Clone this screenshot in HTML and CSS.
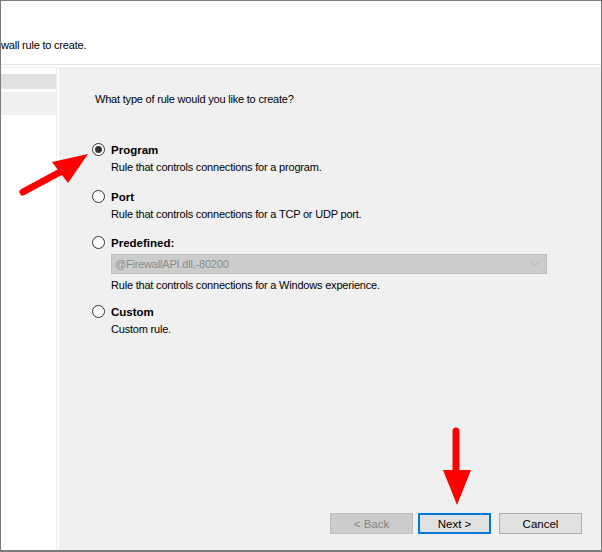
FILE: index.html
```html
<!DOCTYPE html>
<html>
<head>
<meta charset="utf-8">
<link rel="stylesheet" href="styles.css">
</head>
<body>
<div class="window">
  <div class="header">
    <div class="subtitle">wall rule to create.</div>
  </div>
  <div class="main">
    <div class="nav">
      <div class="nav-dots"></div>
      <div class="nav-item"></div>
    </div>
    <div class="content">
      <div class="question">What type of rule would you like to create?</div>
      <div class="options">
        <div class="option">
          <div class="opt-row"><span class="radio checked"></span><span class="label">Program</span></div>
          <div class="desc">Rule that controls connections for a program.</div>
        </div>
        <div class="option">
          <div class="opt-row"><span class="radio"></span><span class="label">Port</span></div>
          <div class="desc">Rule that controls connections for a TCP or UDP port.</div>
        </div>
        <div class="option predefined">
          <div class="opt-row"><span class="radio"></span><span class="label">Predefined:</span></div>
          <div class="select">
            <span>@FirewallAPI.dll,-80200</span>
            <svg class="chev" width="10" height="6" viewBox="0 0 10 6"><path d="M0.5 0.5 L5 5 L9.5 0.5" fill="none" stroke="#b0b0b0" stroke-width="1"/></svg>
          </div>
          <div class="desc after-select">Rule that controls connections for a Windows experience.</div>
        </div>
        <div class="option custom">
          <div class="opt-row"><span class="radio"></span><span class="label">Custom</span></div>
          <div class="desc">Custom rule.</div>
        </div>
      </div>
      <div class="buttons">
        <button class="btn disabled">&lt; Back</button>
        <button class="btn primary">Next &gt;</button>
        <button class="btn cancel">Cancel</button>
      </div>
    </div>
  </div>
  <svg class="arrow" width="602" height="552" viewBox="0 0 602 552">
    <line x1="23" y1="192" x2="62" y2="171" stroke="#ff0000" stroke-width="7" stroke-linecap="round"/>
    <polygon points="52,162 88,154 68,183" fill="#ff0000"/>
    <line x1="456" y1="431" x2="456" y2="475" stroke="#ff0000" stroke-width="7" stroke-linecap="round"/>
    <polygon points="443,470 471,470 457,505" fill="#ff0000"/>
  </svg>
</div>
</body>
</html>
```
FILE: styles.css
```css
* { box-sizing: border-box; }
html, body { margin: 0; padding: 0; }
body {
  font-family: "Liberation Sans", Arial, sans-serif;
  font-size: 11px;
  letter-spacing: -0.2px;
  color: #000;
  background: #fff;
}
.window {
  position: relative;
  width: 602px;
  height: 552px;
  border: 1px solid #7a7a7a;
  border-bottom-width: 2px;
  display: flex;
  flex-direction: column;
  background: #fff;
  overflow: hidden;
}
.header {
  height: 64px;
  background: #fff;
  border-bottom: 1px solid #e6e6e6;
  padding: 37px 0 0 0;
  flex: none;
}
.subtitle {
  line-height: 15px;
  white-space: nowrap;
}
.main {
  flex: 1;
  display: flex;
  margin-top: 2px;
}
.nav {
  width: 56px;
  flex: none;
  background: #fff;
  border-top: 1px solid #f0f0f0;
  border-right: 1px solid #ececec;
  padding-top: 6px;
}
.nav-dots {
  height: 15px;
  background-image: radial-gradient(circle, #e0e0e0 0.7px, transparent 0.9px);
  background-size: 2px 2px;
}
.nav-item {
  margin-top: 3px;
  height: 23px;
  background: #f0f0f0;
}
.content {
  flex: 1;
  margin-left: 2px;
  background: #f0f0f0;
  padding: 25px 0 0 36px;
  display: flex;
  flex-direction: column;
}
.question {
  line-height: 15px;
}
.options {
  margin-top: 35px;
  display: flex;
  flex-direction: column;
  gap: 14px;
}
.option.predefined { margin-top: -1px; }
.option.custom { margin-top: -3px; }
.opt-row {
  display: flex;
  align-items: center;
  height: 15px;
}
.radio {
  width: 13px;
  height: 13px;
  border: 1px solid #333;
  border-radius: 50%;
  background: #fff;
  margin-left: -3px;
  margin-right: 6px;
  position: relative;
  flex: none;
}
.radio.checked::after {
  content: "";
  position: absolute;
  left: 2px; top: 2px;
  width: 7px; height: 7px;
  border-radius: 50%;
  background: #333;
}
.label {
  font-weight: bold;
  font-size: 11.5px;
  letter-spacing: 0;
}
.desc {
  margin-left: 16px;
  margin-top: 3px;
  line-height: 15px;
}
.desc.after-select { margin-top: 4px; }
.select {
  margin: 4px 0 0 16px;
  width: 436px;
  height: 20px;
  background: #cccccc;
  border: 1px solid #bfbfbf;
  color: #8c8c8c;
  display: flex;
  align-items: center;
  justify-content: space-between;
  padding: 0 6px 0 3px;
}
.chev { display: block; }
.buttons {
  margin-top: auto;
  margin-bottom: 16px;
  display: flex;
  padding-left: 235px;
}
.btn {
  font-family: "Liberation Sans", Arial, sans-serif;
  font-size: 11.5px;
  letter-spacing: 0;
  height: 21px;
  padding: 0;
  margin: 0;
  background: #e1e1e1;
  border: 1px solid #adadad;
  color: #000;
}
.btn.disabled {
  width: 83px;
  background: #cccccc;
  border-color: #bfbfbf;
  color: #838383;
}
.btn.primary {
  width: 73px;
  margin-left: 5px;
  border: 2px solid #0078d7;
}
.btn.cancel {
  width: 83px;
  margin-left: 8px;
}
.arrow {
  position: absolute;
  left: -1px;
  top: -1px;
  pointer-events: none;
}
```
